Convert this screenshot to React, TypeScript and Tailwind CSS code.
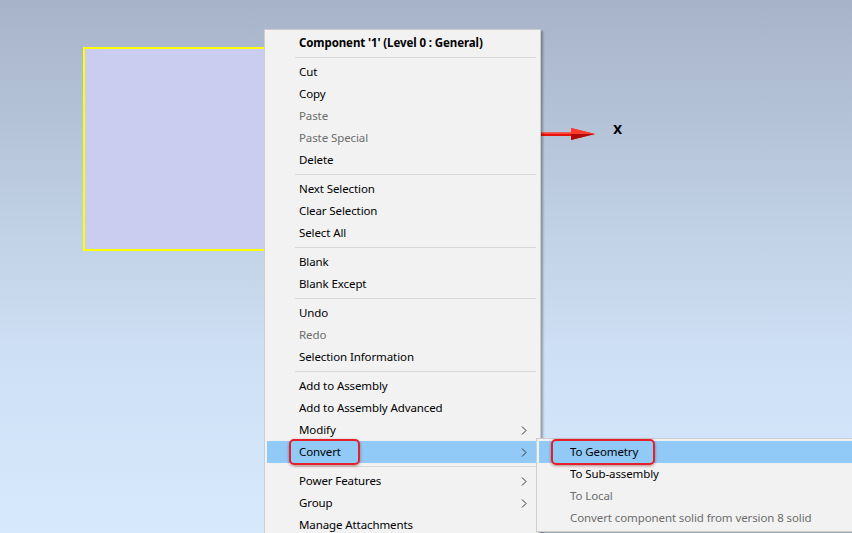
import React from "react";

type Item = {
  label?: string;
  disabled?: boolean;
  bold?: boolean;
  submenu?: boolean;
  active?: boolean;
  ring?: string;
  sep?: boolean;
};

const MAIN: Item[] = [
  { label: "Component '1' (Level 0 : General)", bold: true },
  { sep: true },
  { label: "Cut" },
  { label: "Copy" },
  { label: "Paste", disabled: true },
  { label: "Paste Special", disabled: true },
  { label: "Delete" },
  { sep: true },
  { label: "Next Selection" },
  { label: "Clear Selection" },
  { label: "Select All" },
  { sep: true },
  { label: "Blank" },
  { label: "Blank Except" },
  { sep: true },
  { label: "Undo" },
  { label: "Redo", disabled: true },
  { label: "Selection Information" },
  { sep: true },
  { label: "Add to Assembly" },
  { label: "Add to Assembly Advanced" },
  { label: "Modify", submenu: true },
  { label: "Convert", submenu: true, active: true, ring: "-left-[10px] -right-[19px]" },
  { sep: true },
  { label: "Power Features", submenu: true },
  { label: "Group", submenu: true },
  { label: "Manage Attachments" },
];

const SUB: Item[] = [
  { label: "To Geometry", active: true, ring: "-left-[19px] -right-[17px]" },
  { label: "To Sub-assembly" },
  { label: "To Local", disabled: true },
  { label: "Convert component solid from version 8 solid", disabled: true },
];

function Chevron() {
  return (
    <svg width="6" height="9" viewBox="0 0 6 9" className="absolute right-[10px] top-[7px]">
      <path d="M1 0.5 L5 4.5 L1 8.5" fill="none" stroke="#333" strokeWidth="1" />
    </svg>
  );
}

function MenuRow({ item, indent }: { item: Item; indent: number }) {
  if (item.sep) {
    return (
      <div className="flex h-[7px] items-center pr-[1px]" style={{ paddingLeft: indent - 4 }}>
        <div className="h-px w-full bg-[#d7d7d7]" />
      </div>
    );
  }
  return (
    <div
      className={`relative flex h-[22px] items-center whitespace-nowrap ${item.active ? "bg-[#91c9f7]" : ""} ${
        item.disabled ? "text-[#6d6d6d]" : "text-black"
      } ${item.bold ? "font-bold" : ""}`}
      style={{ paddingLeft: indent }}
    >
      {item.ring ? (
        <span className="relative">
          {item.label}
          <span
            className={`absolute -top-[4px] -bottom-[4px] rounded-[5px] border-2 border-[#e3212b] shadow-[0_1px_3px_rgba(120,0,0,0.45)] ${item.ring}`}
          />
        </span>
      ) : (
        item.label
      )}
      {item.submenu && <Chevron />}
    </div>
  );
}

function Arrow() {
  return (
    <svg width="60" height="14" viewBox="0 0 60 14" className="absolute left-[540px] top-[127px]">
      <rect x="0" y="5.5" width="33" height="3.5" fill="#e8140c" />
      <rect x="0" y="5.5" width="33" height="1.2" fill="#ff5a4a" />
      <polygon points="31,1 55,7 31,13" fill="#e8140c" />
      <polygon points="31,1 55,7 31,7" fill="#ff3a2a" />
      <polygon points="31,7 55,7 31,13" fill="#b00c06" />
    </svg>
  );
}

export default function App() {
  return (
    <div
      className="relative h-[533px] w-[852px] overflow-hidden bg-[linear-gradient(180deg,#a7b3c8_0%,#bccbe0_35%,#cddff4_65%,#d7e9fd_100%)] text-[11.5px] tracking-[-0.1px]"
      style={{ fontFamily: '"Segoe UI", "Noto Sans", "Open Sans", sans-serif' }}
    >
      {/* selected component face */}
      <div className="absolute left-[83px] top-[47px] h-[204px] w-[200px] border-2 border-[#ffff00] bg-[#cbcdf0]" />

      <Arrow />
      <div
        className="absolute left-[613px] top-[121px] text-[12px] font-bold text-black"
        style={{ fontFamily: '"DejaVu Sans", sans-serif' }}
      >
        X
      </div>

      {/* context menu */}
      <div className="absolute left-[264px] top-[29px] w-[277px] border border-[#cccccc] bg-[#f2f2f2] py-[2px] pl-[2px] pr-[3px] shadow-[2px_2px_2px_rgba(0,0,0,0.3)]">
        {MAIN.map((item, i) => (
          <MenuRow key={i} item={item} indent={32} />
        ))}
      </div>

      {/* convert submenu */}
      <div className="absolute left-[536px] top-[438px] w-[340px] border border-[#cccccc] bg-[#f2f2f2] py-[2px] pl-[2px] shadow-[2px_2px_2px_rgba(0,0,0,0.3)]">
        {SUB.map((item, i) => (
          <MenuRow key={i} item={item} indent={31} />
        ))}
      </div>
    </div>
  );
}
